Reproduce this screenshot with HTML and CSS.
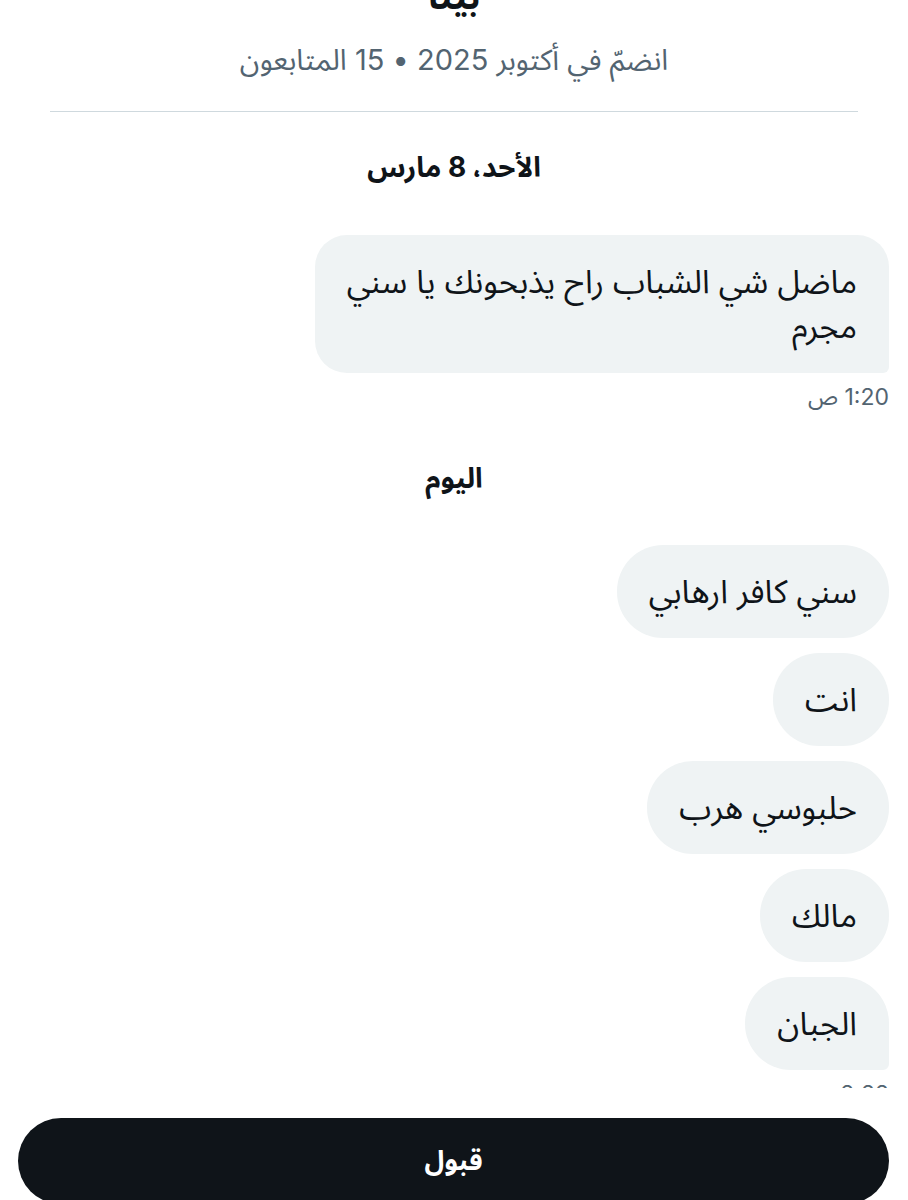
FILE: index.html
```html
<!DOCTYPE html>
<html lang="ar" dir="rtl">
<head>
<meta charset="utf-8">
<title>محادثة</title>
<link rel="stylesheet" href="styles.css">
</head>
<body>
<div class="page">
  <header class="profile">
    <div class="profile-name">بيتا</div>
    <div class="profile-meta">انضمّ في أكتوبر 2025 • 15 المتابعون</div>
  </header>
  <div class="divider"></div>

  <div class="day">الأحد، 8 مارس</div>
  <div class="thread">
    <div class="bubble bubble-last">ماضل شي الشباب راح يذبحونك يا سني<br>مجرم</div>
    <div class="time">1:20 ص</div>
  </div>

  <div class="day day-today">اليوم</div>
  <div class="thread thread-today">
    <div class="bubble">سني كافر ارهابي</div>
    <div class="bubble">انت</div>
    <div class="bubble">حلبوسي هرب</div>
    <div class="bubble">مالك</div>
    <div class="bubble bubble-last">الجبان</div>
    <div class="time">2:22 ص</div>
  </div>
</div>

<footer class="actions">
  <button class="accept">قبول</button>
</footer>
</body>
</html>
```

FILE: styles.css
```css
* { box-sizing: border-box; }

html, body {
  margin: 0;
  padding: 0;
  background: #ffffff;
}

body {
  font-family: "Inter", "Noto Sans Arabic", "DejaVu Sans", sans-serif;
  color: #0f1419;
  width: 908px;
  height: 1200px;
  overflow: hidden;
  position: relative;
}

.page {
  display: flex;
  flex-direction: column;
}

.profile {
  display: flex;
  flex-direction: column;
  align-items: center;
  margin-top: -24px;
}

.profile-name {
  font-size: 36px;
  font-weight: 700;
  line-height: 40px;
}

.profile-meta {
  margin-top: 24px;
  font-size: 29px;
  line-height: 40px;
  color: #536471;
}

.divider {
  margin: 31px 50px 0 50px;
  height: 1px;
  background: #cfd9de;
}

.day {
  margin-top: 37px;
  text-align: center;
  font-size: 28px;
  font-weight: 700;
  line-height: 36px;
}

.day-today {
  margin-top: 49px;
}

.thread {
  display: flex;
  flex-direction: column;
  align-items: flex-start;
  gap: 15px;
  padding: 0 19px 0 19px;
  margin-top: 50px;
}

.thread-today {
  margin-top: 49px;
}

.bubble {
  background: #eff3f4;
  border-radius: 46px;
  padding: 24px 32px;
  font-size: 32.5px;
  line-height: 45px;
  max-width: 640px;
}

.bubble-last {
  border-bottom-right-radius: 6px;
}

.thread .bubble:first-child.bubble-last {
  border-radius: 32px 32px 6px 32px;
}

.time {
  margin-top: -5px;
  font-size: 23px;
  line-height: 28px;
  color: #536471;
}

.actions {
  position: absolute;
  left: 0;
  right: 0;
  bottom: 0;
  height: 112px;
  background: #ffffff;
  padding: 30px 19px 0 18px;
}

.accept {
  display: block;
  width: 100%;
  height: 86px;
  border: none;
  border-radius: 43px;
  background: #0f1419;
  color: #ffffff;
  font-family: "Inter", "Noto Sans Arabic", "DejaVu Sans", sans-serif;
  font-size: 27px;
  font-weight: 700;
}
```
